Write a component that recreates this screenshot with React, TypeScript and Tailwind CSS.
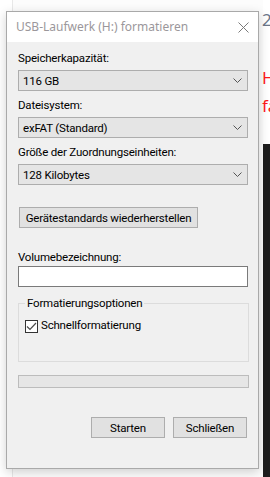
import type { ReactNode } from 'react';

const Label = ({ children, className = '' }: { children: ReactNode; className?: string }) => (
  <div className={`h-[16px] text-[11.5px] leading-[16px] tracking-[-0.2px] text-black ${className}`}>{children}</div>
);

const Chevron = () => (
  <svg width="9" height="5" viewBox="0 0 9 5" fill="none" stroke="#555" strokeWidth="1">
    <path d="M0.5 0.5L4.5 4.5L8.5 0.5" />
  </svg>
);

const Combo = ({ value }: { value: string }) => (
  <div className="mt-[4px] flex h-[21px] w-[230px] items-center justify-between border border-[#adadad] bg-[#e5e5e5] pl-[4px] pr-[5px] text-[11.5px] leading-[16px] tracking-[-0.2px] text-black">
    <span>{value}</span>
    <Chevron />
  </div>
);

const Btn = ({ children, className = '' }: { children: ReactNode; className?: string }) => (
  <div
    className={`flex h-[21px] items-center justify-center whitespace-nowrap border border-[#adadad] bg-[#e1e1e1] text-[11.5px] leading-[16px] tracking-[-0.2px] text-black ${className}`}
  >
    {children}
  </div>
);

export default function App() {
  return (
    <div className="relative h-[477px] w-[270px] overflow-hidden bg-white font-['Roboto',sans-serif]">
      {/* Hintergrund: Fenster dahinter */}
      <div className="absolute bottom-0 left-[12px] top-0 w-[251px] border-l border-[#e8e8e8] bg-[#fcfcfc]" />
      <div className="absolute left-[262px] top-[9px] font-['Noto_Sans',sans-serif] text-[17px] leading-[22px] text-[#6b7689]">
        2
      </div>
      <div className="absolute left-[262px] top-[64px] font-['Noto_Sans',sans-serif] text-[17px] leading-[28px] text-[#ff1a1a]">
        H
        <br />
        fa
      </div>
      <div className="absolute bottom-0 left-[263px] top-[144px] w-[10px] bg-[#1e1e1e]" />

      {/* Dialog */}
      <div className="absolute left-[6px] top-[11px] flex h-[458px] w-[253px] flex-col border border-[#a9a9a9] bg-[#f0f0f0] shadow-[0_3px_10px_rgba(0,0,0,0.18)]">
        <div className="flex h-[30px] items-center justify-between bg-white pl-[9px] pr-[9px]">
          <span className="font-['Noto_Sans',sans-serif] text-[12px] leading-[16px] text-[#9b979b]">
            USB-Laufwerk (H:) formatieren
          </span>
          <svg width="11" height="11" viewBox="0 0 11 11" stroke="#7a7a7a" strokeWidth="1">
            <path d="M0.5 0.5L10.5 10.5M10.5 0.5L0.5 10.5" />
          </svg>
        </div>

        <div className="flex flex-col pl-[11px] pt-[8px]">
          <Label>Speicherkapazität:</Label>
          <Combo value="116 GB" />

          <Label className="mt-[6px]">Dateisystem:</Label>
          <Combo value="exFAT (Standard)" />

          <Label className="mt-[6px]">Größe der Zuordnungseinheiten:</Label>
          <Combo value="128 Kilobytes" />

          <Btn className="ml-[1px] mt-[22px] w-[179px]">Gerätestandards wiederherstellen</Btn>

          <Label className="mt-[21px]">Volumebezeichnung:</Label>
          <div className="mt-[1px] h-[21px] w-[230px] border border-[#7a7a7a] bg-white" />

          <fieldset className="mt-[8px] h-[67px] w-[231px] border border-[#dcdcdc]">
            <legend className="ml-[6px] px-[2px] text-[11.5px] leading-[16px] tracking-[-0.2px] text-black">
              Formatierungsoptionen
            </legend>
            <div className="mt-[6px] flex items-start pl-[6px]">
              <div className="mt-[3px] flex h-[13px] w-[13px] items-center justify-center border border-[#333] bg-white">
                <svg width="11" height="9" viewBox="0 0 11 9" fill="none" stroke="#4a4a4a" strokeWidth="1.2">
                  <path d="M1 4.5L4 7.5L10 1" />
                </svg>
              </div>
              <span className="ml-[3px] text-[11.5px] leading-[16px] tracking-[-0.2px] text-black">
                Schnellformatierung
              </span>
            </div>
          </fieldset>

          <div className="mt-[13px] h-[13px] w-[231px] border border-[#bcbcbc] bg-[#e6e6e6]" />

          <div className="mt-[29px] flex w-[231px] justify-end gap-[8px] pr-[2px]">
            <Btn className="w-[74px]">Starten</Btn>
            <Btn className="w-[74px]">Schließen</Btn>
          </div>
        </div>
      </div>
    </div>
  );
}
